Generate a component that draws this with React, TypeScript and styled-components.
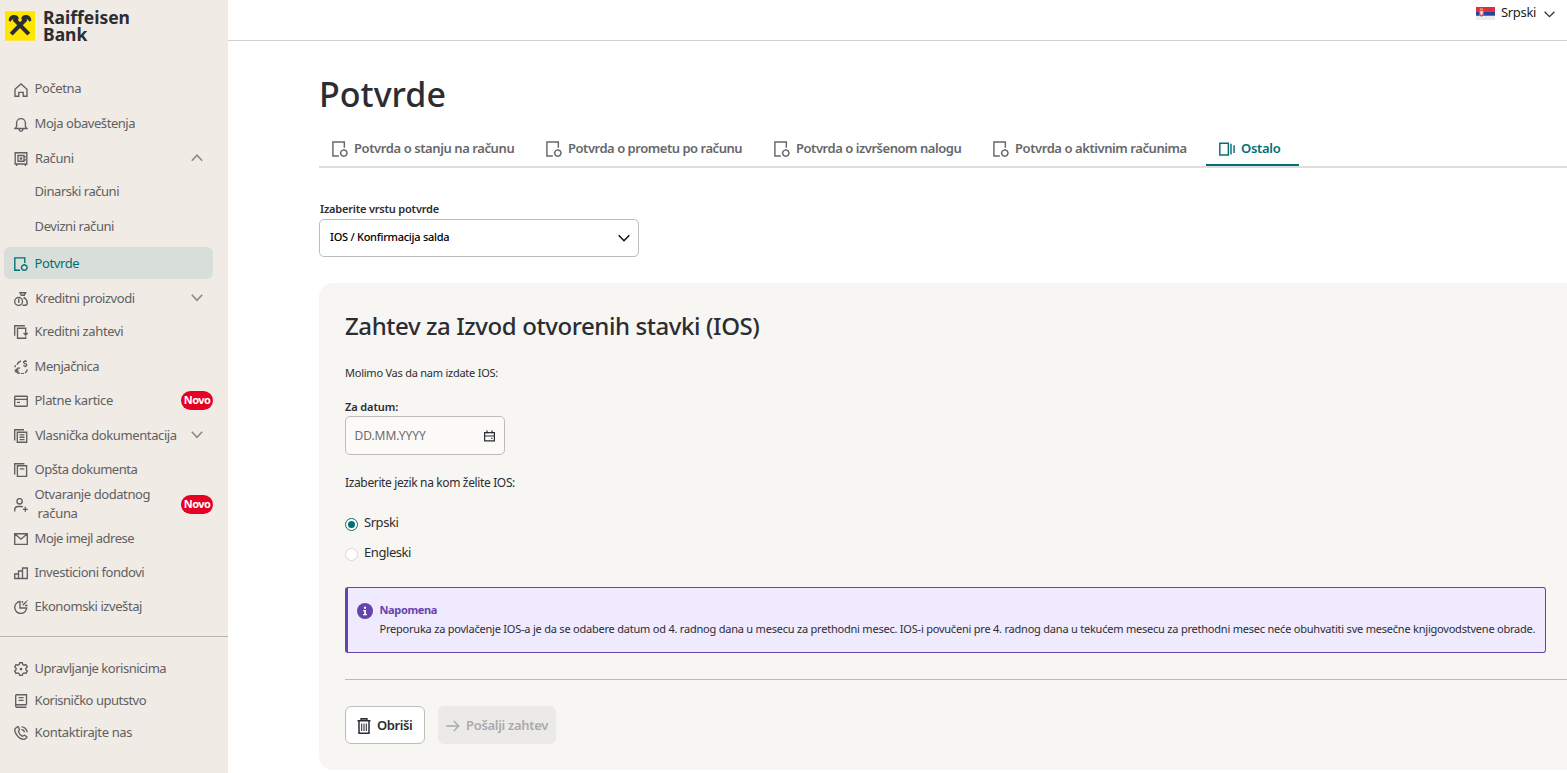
import React from "react";
import styled, { createGlobalStyle, css } from "styled-components";

const teal = "#007073";
const ink = "#2b2d33";
const grey = "#5f6062";

const GlobalStyle = createGlobalStyle`
  * { box-sizing: border-box; }
  body {
    margin: 0;
    background: #fff;
    color: ${ink};
    font-family: "Noto Sans", "Open Sans", sans-serif;
    font-size: 13px;
    overflow: hidden;
  }
`;

/* ---------- shell ---------- */
const Shell = styled.div`
  display: grid;
  grid-template-columns: 228px 1fr;
  height: 773px;
  overflow: hidden;
`;
const Sidebar = styled.aside`
  background: #f0ebe5;
  overflow: hidden;
`;
const Main = styled.main`
  min-width: 0;
`;

/* ---------- brand ---------- */
const Brand = styled.div`
  display: flex;
  height: 73px;
  padding: 11px 0 0 5px;
`;
const BrandName = styled.div`
  margin: -2px 0 0 8px;
  font-size: 17.5px;
  font-weight: 700;
  line-height: 17px;
  letter-spacing: 0;
`;

/* ---------- navigation ---------- */
const Text = styled.span<{ $track?: number }>`
  letter-spacing: ${(p) => p.$track ?? 0}px;
  white-space: pre;
`;
const NavRow = styled.a<{ $gap: number; $active?: boolean }>`
  display: flex;
  align-items: center;
  height: 32px;
  margin: ${(p) => p.$gap}px 15px 0 4px;
  padding-left: 10px;
  border-radius: 6px;
  color: ${grey};
  line-height: 19px;
  ${(p) =>
    p.$active &&
    css`
      background: #d8deda;
      color: ${teal};
    `}
`;
const NavIcon = styled.span`
  display: flex;
  width: 14px;
  height: 14px;
  margin: 2px 6.6px 0 0;
`;
const NavLabel = styled(Text)<{ $shift?: number; $lift?: number }>`
  margin-left: ${(p) => p.$shift ?? 0}px;
  padding-bottom: ${(p) => p.$lift ?? 0}px;
`;
const Second = styled(Text)`
  display: block;
  padding-left: 3px;
`;
const NavEnd = styled.span`
  display: flex;
  justify-content: center;
  width: 32px;
  margin-left: auto;
`;
const Badge = styled.span`
  width: 32px;
  height: 19px;
  border-radius: 10px;
  background: #e60023;
  color: #fff;
  font-size: 11px;
  font-weight: 700;
  letter-spacing: -0.6px;
  line-height: 18px;
  text-align: center;
`;
const SideRule = styled.div`
  height: 1px;
  margin-top: 14px;
  background: #b9b6b2;
`;

/* ---------- top bar ---------- */
const TopBar = styled.header`
  display: flex;
  justify-content: flex-end;
  align-items: flex-start;
  height: 41px;
  padding: 3px 12px 0 0;
  border-bottom: 1px solid #cfcfcf;
  color: #1d1d20;
  line-height: 18px;
`;
const Flag = styled.svg`
  margin: 4px 6px 0 0;
`;
const LangChevron = styled.svg`
  margin: 8px 0 0 8px;
`;

/* ---------- page ---------- */
const Page = styled.div`
  padding-left: 91px;
`;
const Title = styled.h1`
  margin: 0;
  height: 90px;
  padding-top: 30px;
  font-size: 34px;
  font-weight: 500;
  line-height: 46px;
  letter-spacing: 0.03px;
`;
const Tabs = styled.nav`
  display: flex;
  height: 37px;
  border-bottom: 2px solid #e2dddd;
`;
const Tab = styled.a<{ $width: number; $active?: boolean }>`
  display: flex;
  align-items: center;
  width: ${(p) => p.$width}px;
  height: 35px;
  padding-left: 13px;
  font-weight: 600;
  color: ${(p) => (p.$active ? teal : "#66676b")};
  border-bottom: 2px solid ${(p) => (p.$active ? teal : "transparent")};
`;
const TabIcon = styled.span`
  display: flex;
  width: 16px;
  height: 16px;
  margin: 2px 6px 0 0;
`;
const TabLabel = styled(Text)`
  padding-top: 1px;
`;
const FieldLabel = styled.label<{ $inset?: number }>`
  display: block;
  padding-left: ${(p) => p.$inset ?? 0}px;
  font-size: 11px;
  font-weight: 600;
  line-height: 18px;
`;
const Picker = styled.section`
  margin-top: 32px;
`;
const Select = styled.div`
  display: flex;
  align-items: center;
  justify-content: space-between;
  width: 320px;
  height: 38px;
  margin-top: 1px;
  padding: 0 8px 0 10px;
  border: 1px solid #bcbcbc;
  border-radius: 5px;
  background: #fff;
  color: #000;
  font-size: 11px;
  font-weight: 500;
`;
const SelectValue = styled(Text)`
  padding-bottom: 3px;
`;

/* ---------- request card ---------- */
const Card = styled.section`
  height: 487px;
  margin-top: 26px;
  padding-left: 26px;
  border-radius: 14px 0 0 14px;
  background: #f7f6f2;
`;
const CardTitle = styled.h2`
  margin: 0;
  padding-top: 26px;
  font-size: 24px;
  font-weight: 500;
  line-height: 34px;
`;
const Lead = styled.p`
  margin: 21px 0 16px;
  font-size: 11px;
  line-height: 18px;
`;
const DateField = styled.div`
  display: flex;
  align-items: center;
  justify-content: space-between;
  width: 160px;
  height: 39px;
  padding: 0 9px 0 8.5px;
  border: 1px solid #bdbcb8;
  border-radius: 5px;
  background: #fbfaf7;
  color: #6b6c70;
  font-size: 12px;
`;
const Question = styled.p`
  margin: 19px 0 16px;
  font-size: 12px;
  line-height: 18px;
`;
const RadioRow = styled.label`
  display: flex;
  align-items: center;
  height: 30px;
`;
const RadioLabel = styled(Text)`
  padding-bottom: 2px;
`;
const Radio = styled.span<{ $on?: boolean }>`
  display: grid;
  place-items: center;
  width: 13px;
  height: 13px;
  margin: 3px 6px 0 0;
  border: 1px solid ${(p) => (p.$on ? teal : "#d6d6d4")};
  border-radius: 50%;
  background: #fff;
  &::after {
    content: "";
    width: 7px;
    height: 7px;
    border-radius: 50%;
    background: ${(p) => (p.$on ? teal : "transparent")};
  }
`;
const Note = styled.div`
  display: flex;
  height: 66px;
  margin: 19px 21px 0 0;
  padding: 12px 0 0 9px;
  border: 1px solid #6544ad;
  border-left-width: 3px;
  border-radius: 3px;
  background: #f0eaff;
  font-size: 11px;
  line-height: 19px;
`;
const NoteIcon = styled.svg`
  flex: none;
  margin: 3px 6.5px 0 0;
`;
const NoteTitle = styled.div`
  color: #6544ad;
  font-weight: 700;
`;
const Rule = styled.div`
  height: 1px;
  margin-top: 26px;
  background: #bbbab7;
`;
const Actions = styled.div`
  display: flex;
  gap: 13px;
  margin-top: 26px;
`;
const Button = styled.button<{ $width: number; $muted?: boolean }>`
  display: flex;
  align-items: center;
  width: ${(p) => p.$width}px;
  height: 38px;
  padding: 0 0 0 ${(p) => (p.$muted ? 7 : 11)}px;
  border: 1px solid ${(p) => (p.$muted ? "#ebeae7" : "#bdbdbd")};
  border-radius: 6px;
  background: ${(p) => (p.$muted ? "#ebeae7" : "#fff")};
  color: ${(p) => (p.$muted ? "#a9aaad" : ink)};
  font: 600 13px "Noto Sans", sans-serif;
`;
const ButtonIcon = styled.svg`
  flex: none;
  margin: 2px 6px 0 0;
`;

/* ---------- drawings ---------- */
const strokes: Record<string, React.ReactNode> = {
  home: <path d="M1 6.3 7 1l6 5.300v6.900H9.200V9.400H4.800v3.800H1z" />,
  bell: (
    <>
      <path d="M1 10.500h12L11.400 8.600V5a4.400 4.400 0 0 0-8.800 0v3.600z" />
      <path d="M5 11c.2 1.600 1 2.200 2 2.200S8.800 12.600 9 11" />
    </>
  ),
  safe: (
    <>
      <path d="M1.200.700h11.600v11.300H1.200zM2.600 12v2M11.400 12v2M4 3.500h6v5.700H4zM10 4.800h2M10 7.800h2" />
      <path d="M6.500 6h1v1h-1z" />
    </>
  ),
  certificate: (
    <>
      <path d="M6 13.200H.800V.800h10V6" />
      <path d="m10.300 7.600 2.300 1.200.6 1.800-.9 2-2 .8-2-.8-.9-2 .8-1.900z" />
    </>
  ),
  loans: (
    <>
      <circle cx="4.600" cy="9.400" r="3.900" />
      <path d="M4 7.700h.8v3.300M6 .700h5.600l-1.500 2.500H7.300zM7 3.300h4M10 5.200c1.800 1.400 3.300 3.600 3.300 5.700 0 1.500-1 2.300-2.400 2.300H8.500M9.300 6.300h2" />
    </>
  ),
  requests: (
    <>
      <path d="M.700 10.700V.700h10.200" />
      <path d="M11.700 5.500V3.200H3.500v10h8.200v-1.600M11.700 5v4.700M9.600 8l2.100 2 2.100-2" />
    </>
  ),
  exchange: (
    <>
      <path d="M3 4.800A5.800 5.800 0 0 1 7 1M11 13a5.700 5.700 0 0 0 2.400-3.600M7 13.600c1.200.2 2 .1 2.800-.3M.8 7.200 1.500 5.300" />
      <path d="M12.800 1.700c-1.800-1-3.400-.4-3.200.8.2 1.300 3.200.8 3.200 2.400 0 1.400-2.200 1.500-3.500.6M11.200 0v1M11.200 6v1.200M6 8.300c-1.700-1-3.600.2-3.600 2.300S4.300 13.800 6 12.800M.700 9.900h3.800M.700 11.500h3.800" />
    </>
  ),
  card: (
    <>
      <rect x=".7" y="2.200" width="12.600" height="10" rx=".8" />
      <path d="M.700 5.300h12.600M3 8.300h3" />
    </>
  ),
  docs: (
    <>
      <path d="M.700 11.500V.700h9.300" />
      <path d="M3.300 3.200h9.400v10H3.300zM5.500 5.800h5M5.500 8.200h5M5.500 10.600h5" />
    </>
  ),
  doc: (
    <>
      <path d="M.700 11.500V.700h9.700" />
      <path d="M3.400 2.700h9.200v10.800H3.400zM5.800 5.800h4.500" />
    </>
  ),
  userPlus: (
    <>
      <circle cx="5.600" cy="3.300" r="2.700" />
      <path d="M.700 13.500v-1.300c0-2.200 1.300-3.700 3.400-3.700h3c.8 0 1.400.2 1.900.5M11.300 8.800v5M8.800 11.300h5" />
    </>
  ),
  mail: <path d="M.700 1.700h12.600v10.600H.700zM1 2l6 5.200L13 2" />,
  bars: <path d="M.700 8h3.800v4.500H.700zM4.500 5h4v7.500h-4zM8.500 2h4.800v10.500H8.500z" />,
  pie: (
    <>
      <path d="M6 1.500a6 6 0 1 0 6.700 6.500H6z" />
      <path d="m8.700 5.300 3.800-3.800M8.400 1v2M11 5.500h2.500M12.900.600l.5.500" />
    </>
  ),
  gear: (
    <>
      <path d="M5.700.700h2.600l.5 1.900 1.200.6 1.900-.6 1.300 2.200L11.900 6.200v1.500l1.400 1.400L12 11.400l-1.900-.5-1.300.7-.5 1.800H5.700l-.5-1.800-1.300-.7-1.900.5L.700 9.100l1.400-1.400V6.200L.700 4.800 2 2.600l1.900.6 1.300-.6z" />
      <circle cx="7" cy="7" r=".7" />
    </>
  ),
  book: <path d="M12.500 10.700V.700h-10A1 1 0 0 0 1.700 1.700v10.200c0 .8.500 1.300 1.300 1.300h9.500M1.800 10.700h10.700M4.600 3.600h5M4.600 6.300h5" />,
  phone: (
    <>
      <path d="M3.200.900 1.300 2.500c-.9.900-.6 3.100.9 5.600 1.900 3.100 5.300 5.300 8.300 5.200l2-1.500c.5-.4.500-.9 0-1.300L10.400 9.200 8.500 10.300C6.500 9.400 5 7.400 4.400 5.600l1-1.800-.8-2.500c-.3-.6-.9-.8-1.400-.4z" />
      <path d="M7.500.900c3.100 0 5.500 2.400 5.600 5.300M7.400 3.600c1.800 0 2.900 1 3 2.700" />
    </>
  ),
  other: <path d="M.700 2h7.500v10.200H.700zM10.500 2.400v9.400M13.200 3.700v6.800" />,
};

const Icon = ({ name, size = 14 }: { name: string; size?: number }) => (
  <svg width={size} height={size} viewBox="0 0 14 14" fill="none" stroke="currentColor" strokeWidth={size > 14 ? 1.25 : 1.35}>
    {strokes[name]}
  </svg>
);

const NavChevron = ({ up }: { up?: boolean }) => (
  <svg width="12" height="8" viewBox="0 0 12 8" fill="none" stroke="#8c8a88" strokeWidth="1.600">
    <path d={up ? "M.8 6.800 6 1.200l5.200 5.600" : "M.8 .700 6 6.300 11.200.700"} />
  </svg>
);

const Logo = () => (
  <svg width="30" height="30" viewBox="0 0 30 30">
    <rect width="30" height="29.500" y=".2" fill="#fee600" />
    <path d="M6.200 23.200 21 8M23.800 23.200 9 8" stroke={ink} strokeWidth="4" fill="none" />
    <path
      d="M3.600 9.600C3.800 6 6 3.900 9 3.900c2.500 0 4.300 1.200 4.800 3.300L12 11 8.600 8.400 7 8.600 5.600 10.800zM26.400 9.600C26.200 6 24 3.900 21 3.900c-2.500 0-4.300 1.200-4.800 3.300L18 11l3.400-2.600 1.600.2 1.400 2.200z"
      fill={ink}
    />
  </svg>
);

/* ---------- data ---------- */
type Item = {
  icon?: string;
  label: string;
  second?: string;
  track: number;
  gap: number;
  shift?: number;
  lift?: number;
  active?: boolean;
  badge?: boolean;
  chevron?: "up" | "down";
};

const primary: Item[] = [
  { icon: "home", label: "Početna", track: -0.4, gap: 0, lift: 2 },
  { icon: "bell", label: "Moja obaveštenja", track: -0.45, gap: 3, lift: 2 },
  { icon: "safe", label: "Računi", track: -0.4, gap: 2, shift: 0.4, chevron: "up" },
  { label: "Dinarski računi", track: -0.47, gap: 1 },
  { label: "Devizni računi", track: -0.43, gap: 3 },
  { icon: "certificate", label: "Potvrde", track: -0.42, gap: 5, active: true },
  { icon: "loans", label: "Kreditni proizvodi", track: -0.45, gap: 3, shift: 0.6, chevron: "down" },
  { icon: "requests", label: "Kreditni zahtevi", track: -0.37, gap: 1 },
  { icon: "exchange", label: "Menjačnica", track: -0.45, gap: 3 },
  { icon: "card", label: "Platne kartice", track: -0.34, gap: 2, badge: true },
  { icon: "docs", label: "Vlasnička dokumentacija", track: -0.39, gap: 3, shift: 0.6, chevron: "down" },
  { icon: "doc", label: "Opšta dokumenta", track: -0.5, gap: 2 },
  { icon: "userPlus", label: "Otvaranje dodatnog", second: "računa", track: -0.42, gap: 3, badge: true },
  { icon: "mail", label: "Moje imejl adrese", track: -0.5, gap: 2 },
  { icon: "bars", label: "Investicioni fondovi", track: -0.46, gap: 2 },
  { icon: "pie", label: "Ekonomski izveštaj", track: -0.42, gap: 2 },
];

const secondary: Item[] = [
  { icon: "gear", label: "Upravljanje korisnicima", track: -0.49, gap: 15 },
  { icon: "book", label: "Korisničko uputstvo", track: -0.49, gap: 0 },
  { icon: "phone", label: "Kontaktirajte nas", track: -0.36, gap: 0 },
];

const tabs = [
  { label: "Potvrda o stanju na računu", track: -0.41, width: 214 },
  { label: "Potvrda o prometu po računu", track: -0.47, width: 228 },
  { label: "Potvrda o izvršenom nalogu", track: -0.46, width: 219 },
  { label: "Potvrda o aktivnim računima", track: -0.43, width: 226 },
  { label: "Ostalo", track: -0.3, width: 93, active: true },
];

const Nav = ({ items }: { items: Item[] }) => (
  <>
    {items.map((it) => (
      <NavRow key={it.label} $gap={it.gap} $active={it.active}>
        <NavIcon>{it.icon && <Icon name={it.icon} />}</NavIcon>
        <NavLabel $track={it.track} $shift={it.shift} $lift={it.lift}>
          {it.label}
          {it.second && <Second $track={-0.34}>{it.second}</Second>}
        </NavLabel>
        {(it.badge || it.chevron) && (
          <NavEnd>{it.badge ? <Badge>Novo</Badge> : <NavChevron up={it.chevron === "up"} />}</NavEnd>
        )}
      </NavRow>
    ))}
  </>
);

export default function App() {
  return (
    <Shell>
      <GlobalStyle />
      <Sidebar>
        <Brand>
          <Logo />
          <BrandName>
            Raiffeisen
            <br />
            Bank
          </BrandName>
        </Brand>
        <Nav items={primary} />
        <SideRule />
        <Nav items={secondary} />
      </Sidebar>

      <Main>
        <TopBar>
          <Flag width="19" height="13" viewBox="0 0 19 13">
            <rect width="19" height="13" fill="#ececee" />
            <rect width="19" height="4.300" fill="#dd2f3f" />
            <rect y="4.300" width="19" height="4.400" fill="#27439c" />
            <path d="M3 2.500h5v4.800L5.500 10 3 7.300z" fill="#d8505a" />
            <path d="M4.300 4h2.400v3L5.500 8.300 4.300 7z" fill="#f3dede" />
            <path d="M4 1.500h3v1.300H4z" fill="#e8b64c" />
          </Flag>
          <Text $track={-0.34}>Srpski</Text>
          <LangChevron width="11" height="7" viewBox="0 0 11 7" fill="none" stroke="#333" strokeWidth="1.3">
            <path d="m.600.800 4.900 4.900L10.400.800" />
          </LangChevron>
        </TopBar>

        <Page>
          <Title>Potvrde</Title>
          <Tabs>
            {tabs.map((t) => (
              <Tab key={t.label} $width={t.width} $active={t.active}>
                <TabIcon>
                  <Icon name={t.active ? "other" : "certificate"} size={16} />
                </TabIcon>
                <TabLabel $track={t.track}>{t.label}</TabLabel>
              </Tab>
            ))}
          </Tabs>

          <Picker>
            <FieldLabel $inset={1}>
              <Text $track={-0.19}>Izaberite vrstu potvrde</Text>
            </FieldLabel>
            <Select>
              <SelectValue $track={-0.26}>IOS / Konfirmacija salda</SelectValue>
              <svg width="12" height="8" viewBox="0 0 12 8" fill="none" stroke="#111" strokeWidth="1.600">
                <path d="m.700 1.200 5.300 5.500 5.300-5.500" />
              </svg>
            </Select>
          </Picker>

          <Card>
            <CardTitle>
              <Text $track={-0.41}>Zahtev za Izvod otvorenih stavki (IOS)</Text>
            </CardTitle>
            <Lead>
              <Text $track={-0.24}>Molimo Vas da nam izdate IOS:</Text>
            </Lead>
            <FieldLabel>
              <Text $track={-0.1}>Za datum:</Text>
            </FieldLabel>
            <DateField>
              <Text $track={-0.05}>DD.MM.YYYY</Text>
              <svg width="11" height="12" viewBox="0 0 11 12" fill="none" stroke={ink} strokeWidth="1.200">
                <path d="M.600 2.600h9.800v8.300H.600zM.600 6h9.800M3 .500v3M8 .500v3M7.200 8.300h1.200" />
              </svg>
            </DateField>
            <Question>
              <Text $track={-0.36}>Izaberite jezik na kom želite IOS:</Text>
            </Question>
            <RadioRow>
              <Radio $on />
              <RadioLabel $track={-0.45}>Srpski</RadioLabel>
            </RadioRow>
            <RadioRow>
              <Radio />
              <RadioLabel $track={-0.43}>Engleski</RadioLabel>
            </RadioRow>
            <Note>
              <NoteIcon width="16" height="16" viewBox="0 0 16 16">
                <circle cx="8" cy="8" r="8" fill="#6544ad" />
                <path d="M7 3.800h2v1.900H7zM6.200 6.900H9v4h1v1.300H6v-1.300h1.200V8.200h-1z" fill="#fff" />
              </NoteIcon>
              <div>
                <NoteTitle>
                  <Text $track={-0.36}>Napomena</Text>
                </NoteTitle>
                <Text $track={-0.217}>
                  Preporuka za povlačenje IOS-a je da se odabere datum od 4. radnog dana u mesecu za prethodni mesec. IOS-i povučeni pre 4. radnog dana u tekućem mesecu za prethodni mesec neće obuhvatiti sve mesečne knjigovodstvene obrade.
                </Text>
              </div>
            </Note>
            <Rule />
            <Actions>
              <Button $width={80}>
                <ButtonIcon width="14" height="16" viewBox="0 0 14 16" fill="none" stroke={ink}>
                  <path d="M4 2.500V.700h6v1.800" fill="#8b8c90" strokeWidth="1.300" />
                  <path d="M.500 2.800h13M2 3v12.200h10V3" strokeWidth="1.500" />
                  <path d="M4.700 5.500v7.500M7 5.500v7.500M9.300 5.500v7.500" strokeWidth="1.050" />
                </ButtonIcon>
                <Text $track={-0.42}>Obriši</Text>
              </Button>
              <Button $width={118} $muted disabled>
                <ButtonIcon width="14" height="12" viewBox="0 0 14 12" fill="none" stroke="#a9aaad" strokeWidth="1.300">
                  <path d="M.300 6h12.500M7.800 1l5 5-5 5" />
                </ButtonIcon>
                <Text $track={-0.3}>Pošalji zahtev</Text>
              </Button>
            </Actions>
          </Card>
        </Page>
      </Main>
    </Shell>
  );
}
